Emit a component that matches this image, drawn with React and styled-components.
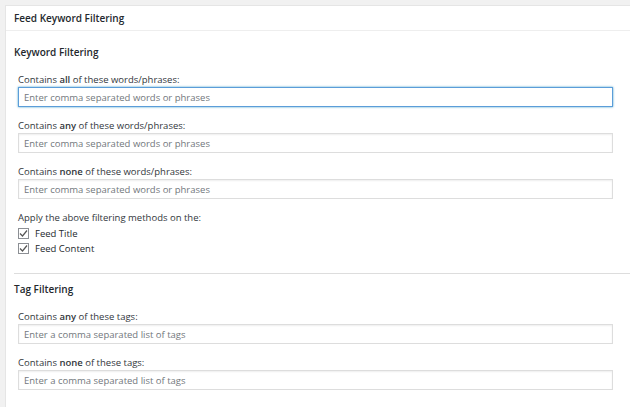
import React from "react";
import styled, { createGlobalStyle } from "styled-components";

const G = createGlobalStyle`
  html,body{margin:0;background:#f1f1f1;font-family:"Open Sans","Segoe UI",sans-serif;color:#23282d;}
`;
const Panel = styled.div`
  margin:5px 0 0 5px;background:#fff;border:1px solid #e5e5e5;border-right:none;height:420px;
`;
const Header = styled.div`
  height:24px;border-bottom:1px solid #eee;padding:0 0 0 8px;display:flex;align-items:center;
  font-size:10px;font-weight:600;
`;
const Body = styled.div`padding:10px 0 0 8px;`;
const Section = styled.div`font-size:10px;font-weight:600;line-height:14px;margin:4px 0 14px;`;
const Field = styled.div`padding-left:4px;margin-bottom:${p=>p.$mb ?? 12}px;display:flex;flex-direction:column;gap:${p=>p.$gap ?? 1}px;`;
const Label = styled.label`font-size:9.5px;line-height:13px;color:#32373c;b{font-weight:600;}`;
const Input = styled.input`
  width:595px;height:20px;box-sizing:border-box;border:1px solid ${p=>p.$focus?"#5b9dd9":"#ddd"};
  box-shadow:${p=>p.$focus?"0 0 2px rgba(30,140,190,.8)":"inset 0 1px 2px rgba(0,0,0,.07)"};
  font:9.5px "Open Sans",sans-serif;padding:0 5px;outline:none;
  &::placeholder{color:#72777c;}
`;
const Check = styled.div`display:flex;align-items:center;gap:6px;font-size:9.5px;height:15px;`;
const Box = styled.span`width:11px;height:11px;border:1px solid #8c8f94;box-sizing:border-box;display:flex;align-items:center;justify-content:center;`;
const Sep = styled.hr`border:none;border-top:1px solid #ddd;margin:17px 0 8px;`;

const Tick = () => <Box><svg width="9" height="9" viewBox="0 0 9 9"><path d="M1 4.5l2.5 2.5L8 1.5" fill="none" stroke="#555" strokeWidth="1.2"/></svg></Box>;

const F = ({w,t,ph,focus}) => (
  <Field><Label>Contains <b>{w}</b> of these {t}:</Label><Input $focus={focus} placeholder={ph}/></Field>
);

export default function App(){
  const p1="Enter comma separated words or phrases", p2="Enter a comma separated list of tags";
  return <><G/><Panel>
    <Header>Feed Keyword Filtering</Header>
    <Body>
      <Section>Keyword Filtering</Section>
      <F w="all" t="words/phrases" ph={p1} focus/>
      <F w="any" t="words/phrases" ph={p1}/>
      <F w="none" t="words/phrases" ph={p1}/>
      <Field $gap={0} $mb={0}>
        <Label style={{marginBottom:2}}>Apply the above filtering methods on the:</Label>
        <Check><Tick/>Feed Title</Check>
        <Check><Tick/>Feed Content</Check>
      </Field>
      <Sep/>
      <Section>Tag Filtering</Section>
      <F w="any" t="tags" ph={p2}/>
      <F w="none" t="tags" ph={p2}/>
    </Body>
  </Panel></>;
}
